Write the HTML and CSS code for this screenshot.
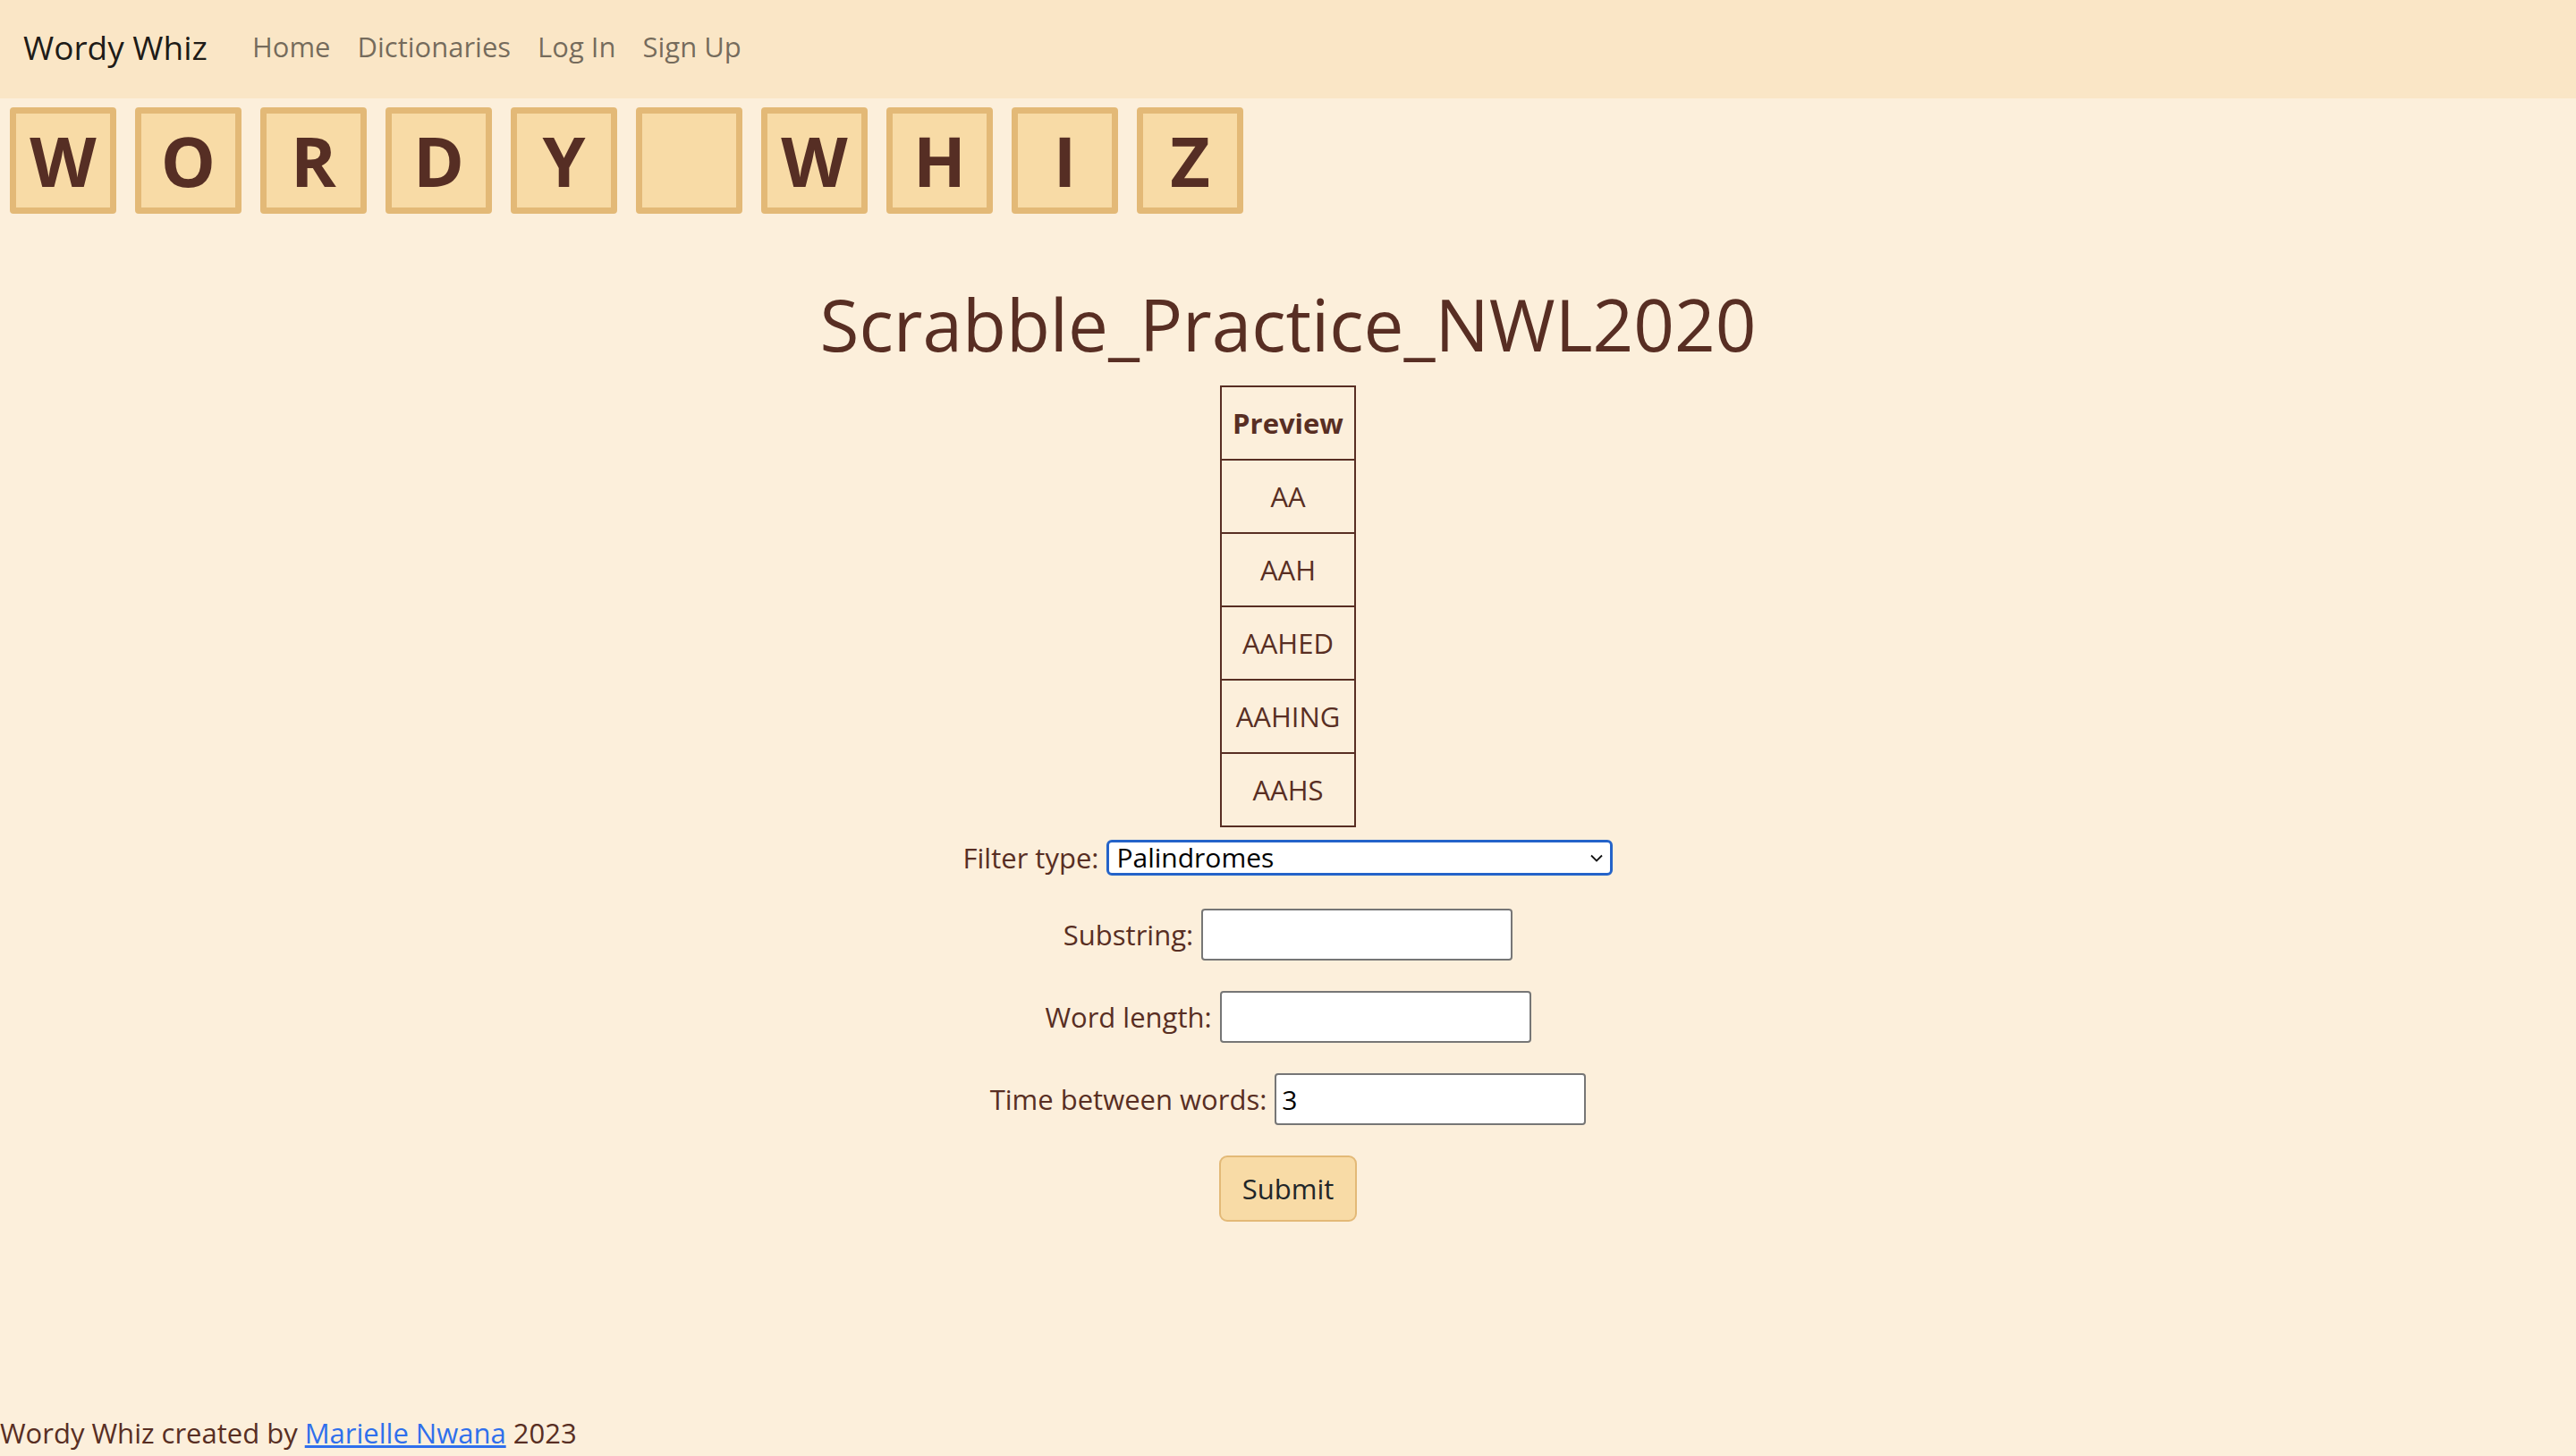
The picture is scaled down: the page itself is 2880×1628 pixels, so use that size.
FILE: index.html
```html
<!DOCTYPE html>
<html lang="en">
<head>
<meta charset="utf-8">
<title>Wordy Whiz</title>
<link rel="stylesheet" href="styles.css">
</head>
<body>
<nav class="navbar">
  <a class="brand" href="#">Wordy Whiz</a>
  <a class="nav-link" href="#">Home</a>
  <a class="nav-link" href="#">Dictionaries</a>
  <a class="nav-link" href="#">Log In</a>
  <a class="nav-link" href="#">Sign Up</a>
</nav>
<div class="tiles">
  <div class="tile">W</div>
  <div class="tile">O</div>
  <div class="tile">R</div>
  <div class="tile">D</div>
  <div class="tile">Y</div>
  <div class="tile"></div>
  <div class="tile">W</div>
  <div class="tile">H</div>
  <div class="tile">I</div>
  <div class="tile">Z</div>
</div>
<main class="main">
  <h1 class="title">Scrabble_Practice_NWL2020</h1>
  <table class="preview">
    <thead><tr><th>Preview</th></tr></thead>
    <tbody>
      <tr><td>AA</td></tr>
      <tr><td>AAH</td></tr>
      <tr><td>AAHED</td></tr>
      <tr><td>AAHING</td></tr>
      <tr><td>AAHS</td></tr>
    </tbody>
  </table>
  <form class="form">
    <div class="row row-first">
      <label class="label" for="ft">Filter type:</label>
      <div class="select-wrap">
        <select id="ft" class="select"><option>Palindromes</option></select>
        <svg class="chevron" width="14" height="9" viewBox="0 0 14 9"><path d="M1 1.5 L7 7.5 L13 1.5" fill="none" stroke="#111" stroke-width="1.8"/></svg>
      </div>
    </div>
    <div class="row">
      <label class="label" for="ss">Substring:</label>
      <input id="ss" class="input" type="text">
    </div>
    <div class="row">
      <label class="label" for="wl">Word length:</label>
      <input id="wl" class="input" type="text">
    </div>
    <div class="row">
      <label class="label" for="tb">Time between words:</label>
      <input id="tb" class="input" type="text" value="3">
    </div>
    <div class="row">
      <button class="submit" type="button">Submit</button>
    </div>
  </form>
</main>
<footer class="footer">Wordy Whiz created by <a class="footer-link" href="#">Marielle Nwana</a> 2023</footer>
</body>
</html>
```
FILE: styles.css
```css
html, body {
  margin: 0;
  padding: 0;
}
body {
  background: #fcefdb;
  font-family: "Open Sans", "Noto Sans", sans-serif;
  color: #582e23;
  min-height: 100vh;
  display: flex;
  flex-direction: column;
}
.navbar {
  height: 110px;
  box-sizing: border-box;
  background: #fae6c6;
  display: flex;
  align-items: center;
  padding: 0 0 6px 26px;
}
.brand {
  font-size: 37px;
  color: rgba(0, 0, 0, 0.9);
  text-decoration: none;
  margin-right: 35px;
}
.nav-link {
  font-size: 31px;
  color: rgba(0, 0, 0, 0.55);
  text-decoration: none;
  padding: 0 15px;
}
.tiles {
  display: flex;
  gap: 21px;
  padding-left: 11px;
  margin-top: 10px;
}
.tile {
  width: 119px;
  height: 119px;
  box-sizing: border-box;
  border: 7px solid #e3b977;
  background: #f8dba6;
  border-radius: 4px;
  display: flex;
  align-items: center;
  justify-content: center;
  font-weight: 700;
  font-size: 77px;
  color: #562e24;
}
.main {
  display: flex;
  flex-direction: column;
  align-items: center;
}
.title {
  font-size: 80px;
  font-weight: 400;
  line-height: 97px;
  margin: 74px 0 0 0;
  color: #582e23;
}
.preview {
  margin-top: 21px;
  border-collapse: collapse;
  width: 152px;
}
.preview th, .preview td {
  border: 2px solid #582e23;
  height: 80px;
  padding: 0 10px;
  text-align: center;
  vertical-align: middle;
  font-size: 31px;
  line-height: 40px;
  color: #582e23;
}
.preview th {
  font-weight: 700;
}
.form {
  margin-top: 13px;
  display: flex;
  flex-direction: column;
  align-items: center;
  gap: 34px;
}
.row {
  display: flex;
  align-items: center;
  justify-content: center;
  gap: 9px;
}
.row-first {
  margin-bottom: 2px;
}
.label {
  font-size: 31px;
  color: #582e23;
}
.select-wrap {
  position: relative;
  display: flex;
}
.select {
  appearance: none;
  -webkit-appearance: none;
  width: 566px;
  height: 40px;
  box-sizing: border-box;
  border: 3px solid #2463c9;
  border-radius: 6px;
  background: #fff;
  font-family: "Open Sans", "Noto Sans", sans-serif;
  font-size: 30px;
  line-height: 34px;
  padding: 0 8px;
  color: #000;
}
.chevron {
  position: absolute;
  right: 11px;
  top: 16px;
}
.input {
  width: 348px;
  height: 58px;
  box-sizing: border-box;
  border: 2px solid #767676;
  border-radius: 4px;
  background: #fff;
  font-family: "Open Sans", "Noto Sans", sans-serif;
  font-size: 30px;
  padding: 0 6px;
  color: #000;
}
.submit {
  height: 74px;
  box-sizing: border-box;
  padding: 0 24px;
  border: 2px solid #e3b977;
  border-radius: 9px;
  background: #f8dba6;
  font-family: "Open Sans", "Noto Sans", sans-serif;
  font-size: 31px;
  color: #212529;
}
.footer {
  margin-top: auto;
  font-size: 31px;
  padding-bottom: 5px;
  color: #582e23;
}
.footer-link {
  color: #2f6fec;
}
```
